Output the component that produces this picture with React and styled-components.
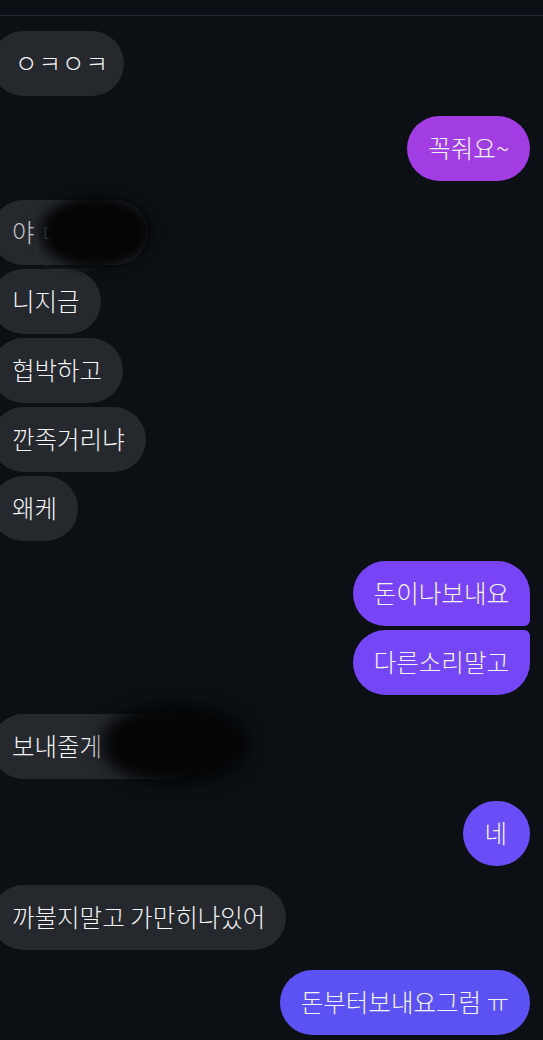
import React from "react";
import styled, { createGlobalStyle } from "styled-components";

const Global = createGlobalStyle`
  html, body { margin: 0; padding: 0; background: #0c1015; }
  body { font-family: "Noto Sans CJK KR", "Noto Sans", sans-serif; overflow: hidden; }
`;

const Screen = styled.div`
  width: 543px;
  height: 1040px;
  background: #0c1015;
  padding-top: 15px;
  box-sizing: border-box;
  overflow: hidden;
  position: relative;
`;

const TopRule = styled.div`
  height: 1px;
  background: #232833;
`;

const Thread = styled.div`
  display: flex;
  flex-direction: column;
  padding: 15px 13px 0 0;
`;

const Bubble = styled.div`
  position: relative;
  align-self: ${(p) => (p.$me ? "flex-end" : "flex-start")};
  margin-left: ${(p) => (p.$me ? "0" : "-9px")};
  margin-top: ${(p) => p.$gap}px;
  height: 65px;
  display: flex;
  align-items: center;
  padding: 0 ${(p) => (p.$padR ?? 21)}px 0 ${(p) => (p.$padL ?? 21)}px;
  box-sizing: border-box;
  border-radius: 33px;
  ${(p) => p.$me && p.$joinBottom && "border-bottom-right-radius: 6px;"}
  ${(p) => p.$me && p.$joinTop && "border-top-right-radius: 6px;"}
  background: ${(p) => p.$bg || "#25282d"};
  color: ${(p) => (p.$dim ? "#c9cacc" : "#f4f4f6")};
  font-size: 24.5px;
  font-weight: 300;
  letter-spacing: ${(p) => (p.$spaced ? "1px" : "0")};
  white-space: pre;
  line-height: 1;
`;

const Smudge = styled.div`
  position: absolute;
  left: ${(p) => p.$x}px;
  top: ${(p) => p.$y}px;
  width: ${(p) => p.$w}px;
  height: ${(p) => p.$h}px;
  border-radius: 50%;
  background: #040506;
  filter: blur(${(p) => p.$blur}px);
  pointer-events: none;
`;

const Outline = styled.div`
  position: absolute;
  left: ${(p) => p.$x}px;
  top: ${(p) => p.$y}px;
  width: ${(p) => p.$w}px;
  height: ${(p) => p.$h}px;
  border-radius: 22px;
  border: 1px solid #33363d;
  filter: blur(1px);
`;

export default function App() {
  return (
    <>
      <Global />
      <Screen>
        <TopRule />
        <Thread>
          <Bubble $gap={0} $spaced $padL={24} $padR={15}>ㅇㅋㅇㅋ</Bubble>
          <Bubble $me $gap={20} $bg="#a13de2">꼭줘요~</Bubble>
          <Bubble $gap={19} $dim $padR={40}>야 ㅁㅁㅁ</Bubble>
          <Bubble $gap={4}>니지금</Bubble>
          <Bubble $gap={4}>협박하고</Bubble>
          <Bubble $gap={4}>깐족거리냐</Bubble>
          <Bubble $gap={4}>왜케</Bubble>
          <Bubble $me $gap={20} $bg="#7944f5" $joinBottom>돈이나보내요</Bubble>
          <Bubble $me $gap={4} $bg="#7546f5" $joinTop>다른소리말고</Bubble>
          <Bubble $gap={19} $padR={100}>보내줄게</Bubble>
          <Bubble $me $gap={22} $bg="#6a4df6" $padR={23}>네</Bubble>
          <Bubble $gap={19}>까불지말고 가만히나있어</Bubble>
          <Bubble $me $gap={20} $bg="#5c52f3">돈부터보내요그럼 ㅠ</Bubble>
        </Thread>
        <Outline $x={36} $y={222} $w={72} $h={46} />
        <Smudge $x={40} $y={196} $w={112} $h={72} $blur={6} />
        <Smudge $x={100} $y={703} $w={150} $h={82} $blur={8} />
      </Screen>
    </>
  );
}
